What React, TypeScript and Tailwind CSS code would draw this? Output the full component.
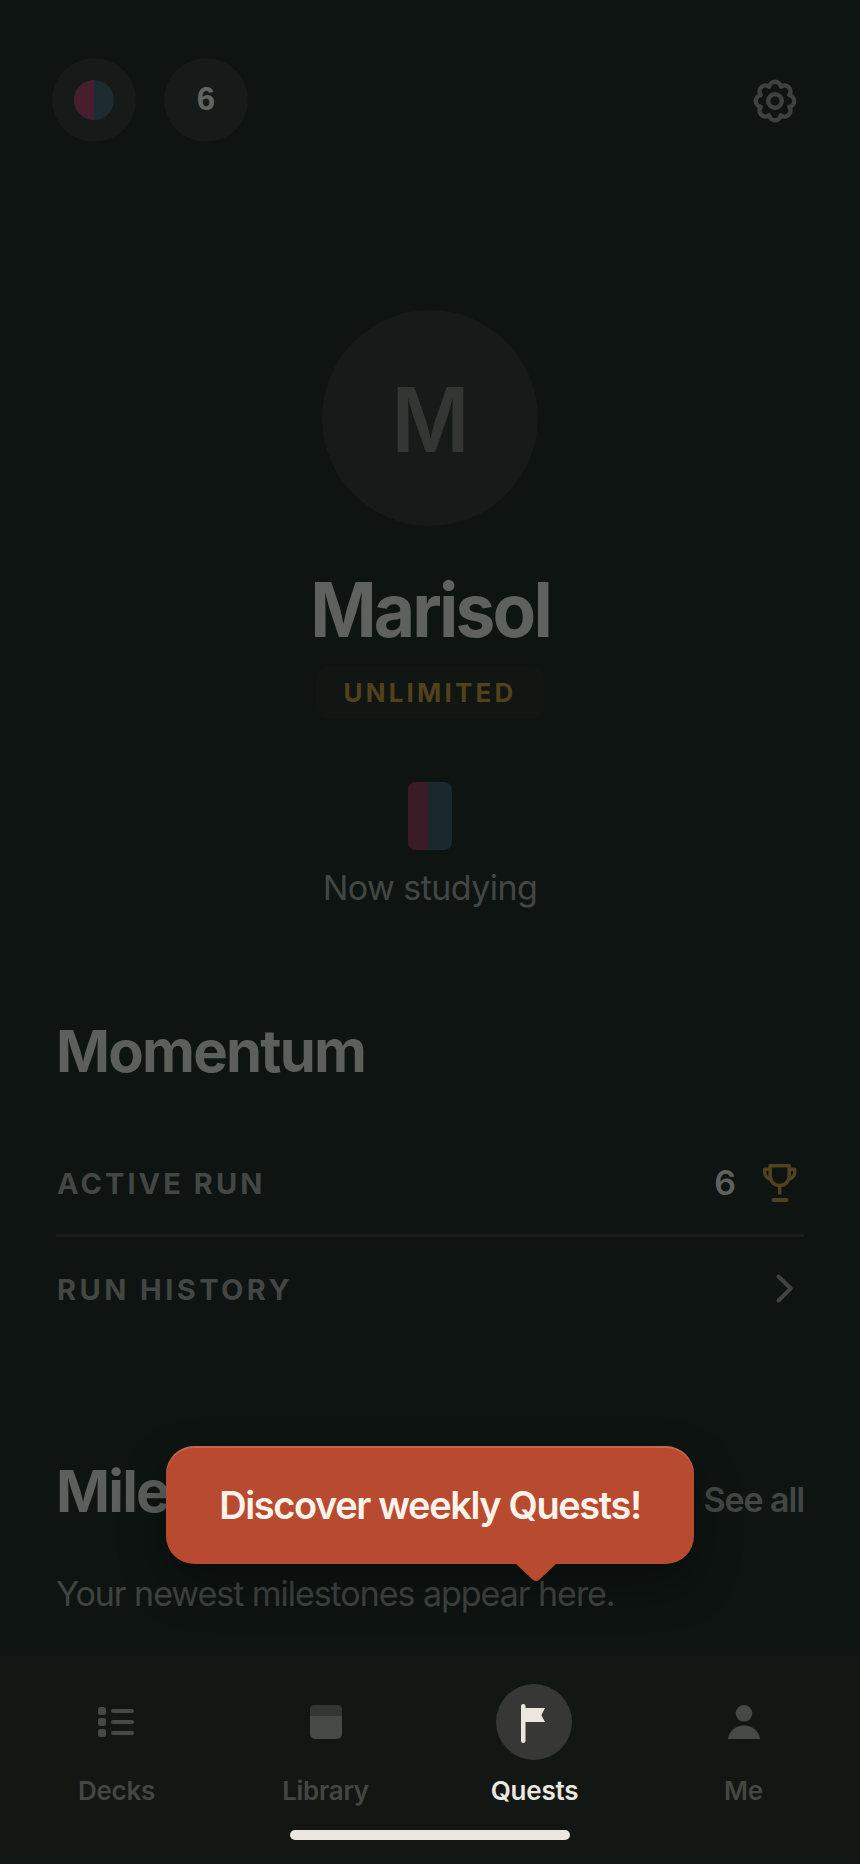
import React from 'react';

const GearIcon = () => (
  <svg width="48" height="48" viewBox="-24 -24 48 48" fill="none" stroke="#3d413f" strokeWidth="4.400" strokeLinejoin="round">
    <path d="M-5.9 -14.3A6 6 0 0 1 5.9 -14.3A6 6 0 0 1 14.3 -5.9A6 6 0 0 1 14.3 5.9A6 6 0 0 1 5.9 14.3A6 6 0 0 1 -5.9 14.3A6 6 0 0 1 -14.3 5.9A6 6 0 0 1 -14.3 -5.9A6 6 0 0 1 -5.9 -14.3Z" />
    <circle r="6.8" />
  </svg>
);

const TrophyIcon = () => (
  <svg width="36" height="40" viewBox="0 0 36 40" fill="none" stroke="#52411f" strokeWidth="3.500" strokeLinejoin="round">
    <path d="M8.200 2.800h19v10c0 5.600-4 9.600-9.500 9.600s-9.500-4-9.500-9.600z" />
    <path d="M8 6.300H2.700v3.200c0 3 2 5.300 6 6.800M27.400 6.300h5.300v3.200c0 3-2 5.300-6 6.800M17.700 22.500v9" />
    <path d="M11.500 37h13" strokeWidth="4" strokeLinecap="round" />
  </svg>
);

const ChevronIcon = () => (
  <svg className="mr-[10px]" width="20" height="32" viewBox="0 0 20 32" fill="none" stroke="#3f4341" strokeWidth="4" strokeLinecap="round" strokeLinejoin="round">
    <path d="M4.500 3.500l12.300 12-12.300 12" />
  </svg>
);

const DecksIcon = () => (
  <svg className="mr-[2px]" width="36" height="32" viewBox="0 0 36 32" fill="#454a46">
    <rect x="0" y="1" width="8" height="8" rx="2.500" />
    <rect x="0" y="12" width="8" height="8" rx="2.500" />
    <rect x="0" y="23" width="8" height="8" rx="2.500" />
    <rect x="13" y="3" width="23" height="4" rx="2" />
    <rect x="13" y="14" width="23" height="4" rx="2" />
    <rect x="13" y="25" width="23" height="4" rx="2" />
  </svg>
);

const LibraryIcon = () => (
  <svg width="32" height="34" viewBox="0 0 32 34">
    <rect width="32" height="34" rx="5" fill="#454a46" />
    <path d="M0 11V5a5 5 0 0 1 5-5h22a5 5 0 0 1 5 5v6z" fill="#323733" />
  </svg>
);

const QuestsIcon = () => (
  <svg className="mr-[2px] mt-[3px]" width="24" height="39" viewBox="0 0 24 39" fill="#ece7de">
    <rect width="4.500" height="39" rx="2.200" />
    <path d="M4 4h20l-3.600 7.200L24 18H4z" />
  </svg>
);

const MeIcon = () => (
  <svg width="32" height="34" viewBox="0 0 32 34" fill="#454a46">
    <circle cx="16" cy="8.300" r="8.300" />
    <path d="M0 34C1 26 7.500 20.500 16 20.500S31 26 32 34z" />
  </svg>
);

const tabs = [
  { label: 'Decks', icon: <DecksIcon /> },
  { label: 'Library', icon: <LibraryIcon /> },
  { label: 'Quests', icon: <QuestsIcon />, active: true },
  { label: 'Me', icon: <MeIcon /> },
];

const App: React.FC = () => {
  return (
    <div className="relative flex h-[1864px] w-[860px] flex-col overflow-hidden bg-[#0d1412] font-['Inter',sans-serif]">
      <header className="flex h-[200px] items-start justify-between pl-[52px] pr-[61px] pt-[58px]">
        <div className="flex gap-7">
          <div className="flex size-[84px] items-center justify-center rounded-full bg-[#161a18]">
            <div className="flex size-10 overflow-hidden rounded-full bg-[#1c2c31]">
              <div className="w-1/2 bg-[#471e2d]" />
            </div>
          </div>
          <div className="flex size-[84px] items-center justify-center rounded-full bg-[#161a18] pb-[3px] font-['Liberation_Sans',sans-serif] text-[33px] font-bold leading-none text-[#626461]">
            6
          </div>
        </div>
        <div className="mt-[19px]">
          <GearIcon />
        </div>
      </header>

      <section className="flex h-[740px] flex-col items-center pt-[110px]">
        <div className="flex size-[216px] items-center justify-center rounded-full bg-[#161a18] pl-[2px] pt-[3px] text-[90px] font-semibold leading-none text-[#333633]">
          <span className="inline-block scale-x-[0.940]">M</span>
        </div>
        <h1 className="mt-11 h-20 scale-x-[0.950] text-[75px] font-bold leading-[80px] tracking-[-3px] text-[#5f615e]">Marisol</h1>
        <div className="mt-[17px] flex h-[52px] items-center rounded-xl bg-[#111612] px-[27px] text-[26px] font-bold leading-none tracking-[3.200px] text-[#52411d]">
          UNLIMITED
        </div>
        <div className="mt-[63px] flex h-[68px] w-11 overflow-hidden rounded-lg bg-[#1a292b]">
          <div className="w-5 bg-[#3b1b26]" />
        </div>
        <p className="mt-[18px] h-10 text-[34px] leading-10 tracking-[-0.550px] text-[#424744]">Now studying</p>
      </section>

      <section className="flex h-[500px] flex-col px-14 pt-[81px]">
        <h2 className="h-[60px] text-[58px] font-bold leading-[60px] tracking-[-1.800px] text-[#5d5f5c]">Momentum</h2>
        <div className="mt-[50px] flex h-[106px] items-center justify-between border-b-[3px] border-[#181c1b] text-[#424744]">
          <span className="pl-px pt-[2px] text-[29px] font-bold leading-none tracking-[3.050px]">ACTIVE RUN</span>
          <div className="flex items-center gap-[26px] pr-[6px]">
            <span className="text-[34px] font-semibold leading-none text-[#5f615e]">6</span>
            <TrophyIcon />
          </div>
        </div>
        <div className="flex h-[104px] items-center justify-between text-[#424744]">
          <span className="pl-px pt-px text-[29px] font-bold leading-none tracking-[3.450px]">RUN HISTORY</span>
          <ChevronIcon />
        </div>
      </section>

      <section className="flex flex-1 flex-col px-14 pt-[21px]">
        <div className="flex h-[60px] items-center justify-between">
          <h2 className="text-[58px] font-bold leading-[60px] tracking-[-1.800px] text-[#5d5f5c]">Milestones</h2>
          <a className="pt-[17px] text-[34px] font-semibold leading-10 tracking-[-1.100px] text-[#424744]">See all</a>
        </div>
        <p className="mt-[53px] text-[34px] leading-10 tracking-[-1.040px] text-[#3f4441]">Your newest milestones appear here.</p>
      </section>

      <nav className="flex h-[208px] flex-col items-center bg-[#121713]">
        <div className="flex w-full px-3 pt-7">
          {tabs.map((tab) => (
            <div key={tab.label} className="flex flex-1 flex-col items-center">
              <div className={tab.active ? 'mr-px flex size-[76px] items-center justify-center rounded-full bg-[#373836]' : 'flex size-[76px] items-center justify-center'}>
                {tab.icon}
              </div>
              <span className={tab.active ? 'mt-[15px] text-[26px] font-semibold leading-8 tracking-[-0.200px] text-[#ece7e0]' : 'mt-[15px] text-[26px] font-semibold leading-8 tracking-[-0.300px] text-[#424743]'}>
                {tab.label}
              </span>
            </div>
          ))}
        </div>
        <div className="mt-[23px] h-[10px] w-[280px] rounded-full bg-[#ece7e0]" />
      </nav>

      {/* coach mark pointing at the Quests tab */}
      <div className="absolute left-[166px] top-[1446px] flex h-[118px] w-[528px] items-center justify-center rounded-[28px] bg-[#b84a30] pb-px shadow-[inset_0_2px_0_rgba(255,255,255,0.16),0_20px_48px_rgba(0,0,0,0.32)]">
        <span className="text-[38px] font-semibold leading-none tracking-[-1.400px] text-[#fdf3eb]">Discover weekly Quests!</span>
        <svg className="absolute left-[350px] top-[117px]" width="40" height="19" viewBox="0 0 40 19" fill="#b84a30">
          <path d="M0 0h40v1L23.500 16.500q-3.500 3-7 0L0 1z" />
        </svg>
      </div>
    </div>
  );
};

export default App;
